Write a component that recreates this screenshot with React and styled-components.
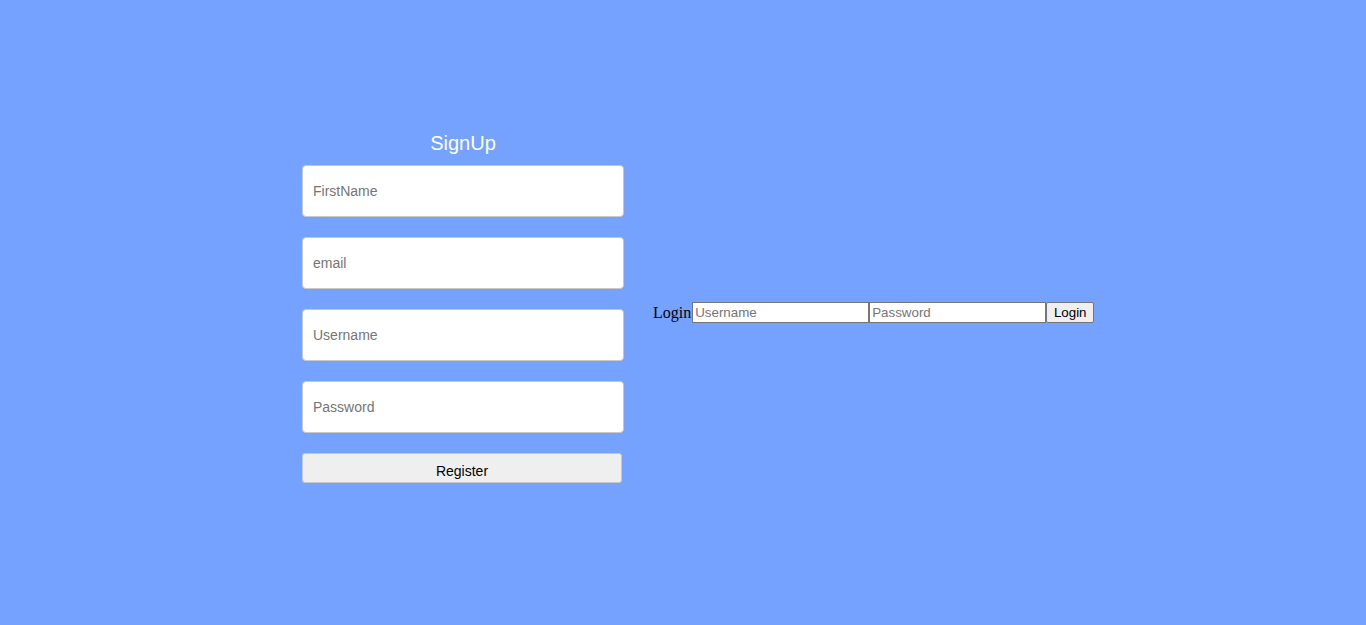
import React from "react";
import styled, { createGlobalStyle } from "styled-components";

const Global = createGlobalStyle`
body {
    margin: 0;
    background-color: #76a2ff;
    font-family: "Liberation Serif", serif;
}
`
const Page = styled.main`
display: flex;
align-items: center;
height: 625px;
padding-left: 302px;
box-sizing: border-box;
`
const SignUp = styled.section`
display: flex;
flex-direction: column;
width: 322px;
padding-bottom: 12px;
`
const Title = styled.h2`
margin: 0 0 10px 0;
text-align: center;
font-family: "Liberation Sans", Arial, sans-serif;
font-weight: normal;
font-size: 20px;
line-height: 24px;
color: white;
`
const Field = styled.input`
    height: 52px;
    box-sizing: border-box;
    margin-bottom: 20px;
    padding: 0 10px;
    border: 1px solid #c8c8c8;
    border-radius: 4px;
    background: white;
    font-family: "Liberation Sans", Arial, sans-serif;
    font-size: 14px;
    &::placeholder { color: #757575; }
`
const Register = styled.button`
    width: 320px;
    height: 30px;
    padding-top: 7px;
    border: 1px solid #c8c8c8;
    border-radius: 3px;
    background-color: #efefef;
    font-family: "Liberation Sans", Arial, sans-serif;
    font-size: 14px;
    color: black;
`
const LoginRow = styled.form`
display: flex;
align-items: center;
margin-left: 29px;
font-size: 16px;
color: black;
`
const Label = styled.span`
padding-right: 1px;
`
const SmallInput = styled.input`
    width: 177px;
    height: 21px;
    box-sizing: border-box;
    padding: 1px 2px;
    border: 1px solid #767676;
    font-family: "Liberation Sans", Arial, sans-serif;
    font-size: 13.33px;
    &::placeholder { color: #757575; }
`
const SmallButton = styled.button`
    width: 48px;
    height: 21px;
    padding: 1px 6px;
    border: 1px solid #767676;
    border-radius: 2px;
    background-color: #efefef;
    font-family: "Liberation Sans", Arial, sans-serif;
    font-size: 13.33px;
    color: black;
`

const App = () => {
    return(
        <>
            <Global />
            <Page>
                <SignUp>
                    <Title>SignUp</Title>
                    <Field placeholder="FirstName" />
                    <Field placeholder="email" />
                    <Field placeholder="Username" />
                    <Field placeholder="Password" type="password" />
                    <Register>Register</Register>
                </SignUp>
                <LoginRow onSubmit={(e) => e.preventDefault()}>
                    <Label>Login</Label>
                    <SmallInput placeholder="Username" />
                    <SmallInput placeholder="Password" type="password" />
                    <SmallButton>Login</SmallButton>
                </LoginRow>
            </Page>
        </>
    )
}
export default App
